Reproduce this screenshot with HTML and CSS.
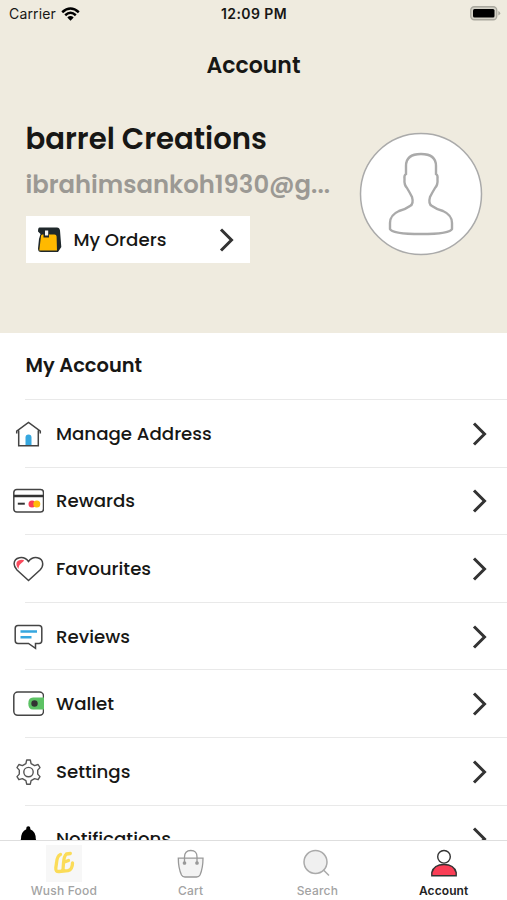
FILE: index.html
```html
<!DOCTYPE html>
<html lang="en">
<head>
<meta charset="utf-8">
<title>Account</title>
<link rel="stylesheet" href="styles.css">
</head>
<body>
<div class="app">
  <header class="hero">
    <div class="status">
      <div class="carrier"><span>Carrier</span>
        <svg width="19" height="14" viewBox="0 0 19 14" fill="none" stroke="#000" stroke-width="2.5"><path d="M1.2 5.2Q9.500-2.300 17.800 5.200"/><path d="M4.200 8.200Q9.500 3.400 14.800 8.200"/><path d="M9.500 13.800L6.300 10.500Q9.500 7.700 12.700 10.500Z" fill="#000" stroke="none"/></svg>
      </div>
      <span class="time">12:09 PM</span>
      <svg class="battery" width="31" height="15" viewBox="0 0 31 15"><rect x=".75" y=".75" width="26" height="13" rx="3.500" fill="#d5d2c7" stroke="#aaa89e" stroke-width="1.300"/><rect x="3" y="3" width="21.500" height="8.500" rx="1.500"/><path d="M28.300 5v4.500q1.900-.7 1.900-2.250T28.300 5z" fill="#aaa89e"/></svg>
    </div>
    <h1 class="title">Account</h1>
    <div class="profile">
      <div class="who">
        <div class="name">barrel Creations</div>
        <div class="email">ibrahimsankoh1930@g...</div>
        <div class="orders">
          <svg width="25" height="26" viewBox="0 0 25 26"><path d="M2.500.5H20Q22.500.5 23 3.500L24.300 20L21 25H4Q1 25 1 21.500L2 12L3.500 7L1 4.500Q1 .5 2.500.5Z" fill="#1f282b"/><path d="M4 9Q4 7.500 5.500 7.500H6.500V10.500H12V7.500H17.500Q19.500 7.500 19.600 9.500L20 23.500H2.300Z" fill="#ffb900"/><path d="M8 3.500h3.200v5H8z" fill="#f5f5f5"/></svg>
          <span class="orders-label">My Orders</span>
          <svg class="chevron" width="16" height="26" viewBox="0 0 16 26"><path d="M2 2.500l10.500 10.500L2 23.500"/></svg>
        </div>
      </div>
      <svg class="avatar" width="124" height="124" viewBox="0 0 124 124"><circle cx="62" cy="62" r="60.500" fill="#fff" stroke="#aaa" stroke-width="1.500"/><path d="M47 42V34Q47 22 62 22T77 34V42Q79 43 78.500 47Q79 53 76 56Q73 61 71 65Q69 72 73 74Q77 77 84 79Q93 83 93 91V97Q91 102 62 102T31 97V91Q31 83 40 79Q47 77 51 74Q55 72 53 65Q51 61 48 56Q45 53 45.500 47Q45 43 47 42Z" fill="none" stroke="#aaa" stroke-width="2.400"/></svg>
    </div>
  </header>

  <main class="menu">
    <h2 class="heading">My Account</h2>
    <div class="row">
      <svg class="icon" viewBox="0 0 32 32"><path d="M6.700 12.500v15.200h19.600V12.500M4.700 15.500v-2.300L16.500 4.500l11.800 8.700v2.300" class="ln"/><path d="M13.500 27V19.500q0-3 3-3t3 3v7.500z" fill="#36a7df"/></svg>
      <span class="label">Manage Address</span>
      <svg class="chevron" width="16" height="26" viewBox="0 0 16 26"><path d="M2 2.500l10.500 10.500L2 23.500"/></svg>
    </div>
    <div class="row">
      <svg class="icon" viewBox="0 0 32 32"><rect x="1.800" y="4.500" width="29.700" height="22.500" rx="3" class="ln"/><path d="M1.800 11h29.700" stroke="#333" stroke-width="2.500"/><path d="M5.800 18.700h7" stroke="#333" stroke-width="2"/><circle cx="20" cy="19" r="3.500" fill="#fa3e56"/><circle cx="24.800" cy="19" r="3.500" fill="#ffbb0a"/></svg>
      <span class="label">Rewards</span>
      <svg class="chevron" width="16" height="26" viewBox="0 0 16 26"><path d="M2 2.500l10.500 10.500L2 23.500"/></svg>
    </div>
    <div class="row">
      <svg class="icon" viewBox="0 0 32 32"><path d="M16.500 27.500L5 17Q2 13.500 2.100 10.800C2.300 4.300 11.500 2 16.500 8.500C21.500 2 30.500 4.300 30.700 10.800Q31 13.500 28 17Z" class="ln"/><path d="M6.500 16Q3.800 12.500 4.600 9.500Q6.500 6 12 7Q12 8.600 9.500 10Q6.500 12 6.500 16Z" fill="#fa4a5d"/></svg>
      <span class="label">Favourites</span>
      <svg class="chevron" width="16" height="26" viewBox="0 0 16 26"><path d="M2 2.500l10.500 10.500L2 23.500"/></svg>
    </div>
    <div class="row">
      <svg class="icon" viewBox="0 0 32 32"><path d="M6 4.500H27Q29.800 4.500 29.800 7.500V19.500Q29.800 22.500 27 22.500H23.500V27.300L16.500 22.500H6Q3.200 22.500 3.200 19.500V7.500Q3.200 4.500 6 4.500" class="ln"/><path d="M8.500 10.500H25M8.500 16.300H19.500" stroke="#36a7df" stroke-width="2.600"/></svg>
      <span class="label">Reviews</span>
      <svg class="chevron" width="16" height="26" viewBox="0 0 16 26"><path d="M2 2.500l10.500 10.500L2 23.500"/></svg>
    </div>
    <div class="row">
      <svg class="icon" viewBox="0 0 32 32"><rect x="1.800" y="4" width="29.700" height="23.300" rx="4" class="ln"/><path d="M32 9.500H21Q16.300 9.500 16.300 15.500T21 21.500H32Z" fill="#5cc264"/><circle cx="22.500" cy="15.500" r="3.200" fill="#333"/></svg>
      <span class="label">Wallet</span>
      <svg class="chevron" width="16" height="26" viewBox="0 0 16 26"><path d="M2 2.500l10.500 10.500L2 23.500"/></svg>
    </div>
    <div class="row">
      <svg class="icon" viewBox="0 0 32 32"><path d="M14.700 4h3.600l.8 3.600 3.500 2 3.500-1.100 1.900 3.100-2.300 2.500v4l2.300 2.500-1.900 3.100-3.500-1.100-3.500 2-.8 3.600h-3.600l-.8-3.600-3.500-2-3.500 1.100L5 20.600l2.300-2.500v-4L5 11.600l1.900-3.100 3.500 1.100 3.500-2z" stroke-linejoin="round" class="thin"/><circle cx="16.500" cy="16.100" r="4.700" class="thin"/></svg>
      <span class="label">Settings</span>
      <svg class="chevron" width="16" height="26" viewBox="0 0 16 26"><path d="M2 2.500l10.500 10.500L2 23.500"/></svg>
    </div>
    <div class="row">
      <svg class="icon" viewBox="0 0 32 32"><path d="M14.300 5Q14.300 3.300 16.300 3.300T18.300 5V6.200Q23.800 8.500 23.800 16L26 23H6.500L9 16Q9 8.500 14.300 6.200Z"/></svg>
      <span class="label">Notifications</span>
      <svg class="chevron" width="16" height="26" viewBox="0 0 16 26"><path d="M2 2.500l10.500 10.500L2 23.500"/></svg>
    </div>
  </main>

  <nav class="tabs">
    <div class="tab">
      <svg width="36" height="37" viewBox="0 0 36 37"><path d="M0 0h36v37H0z" fill="#f7f7f7"/><path d="M14.500 9.500Q11 11 10.500 18L9.800 23Q9.500 26.800 13 26.500L22 25.700Q26.500 24.500 26.500 18M20.500 9Q18 11 17.500 18L17 25M20.500 9L24.300 8.500M18.500 17L22.500 15.500" fill="none" stroke="#fbdc58" stroke-width="3.300" stroke-linecap="round" stroke-linejoin="round"/></svg>
      <span>Wush Food</span>
    </div>
    <div class="tab">
      <svg width="36" height="37" viewBox="0 0 36 37" fill="none" stroke="#999" stroke-width="1.300"><path d="M5.300 13.200H30Q30 23 27 30Q26 32 23.500 32H12Q9.500 32 8.500 30Q5.300 23 5.300 13.200Z" fill="#f3f3f3"/><path d="M11.500 18V12Q11.500 5.500 17.800 5.500T24 12V18"/><circle cx="11.500" cy="18" r="1.200" fill="#999"/><circle cx="24" cy="18" r="1.200" fill="#999"/></svg>
      <span>Cart</span>
    </div>
    <div class="tab">
      <svg width="36" height="37" viewBox="0 0 36 37" fill="none" stroke="#aaa" stroke-width="1.500"><circle cx="16.500" cy="17" r="11.500" fill="#f0f0f0"/><path d="M24.500 25L30 30.500"/></svg>
      <span>Search</span>
    </div>
    <div class="tab active">
      <svg width="36" height="37" viewBox="0 0 36 37" stroke="#333" stroke-width="1.400"><circle cx="18" cy="11.800" r="6.300" fill="#fff"/><path d="M5.800 30.700V27.500Q8 19.500 18 19.500T30.200 27.500V30.700Z" fill="#fa3e56"/></svg>
      <span>Account</span>
    </div>
  </nav>
</div>
</body>
</html>
```
FILE: styles.css
```css
* { box-sizing: border-box; }
body { margin: 0; background: #fff; font-family: Poppins, Inter, sans-serif; color: #171715; }
svg { display: block; flex: none; }
.app { width: 507px; height: 900px; display: flex; flex-direction: column; overflow: hidden; }

.hero { height: 333px; flex: none; background: #efebdf; }
.status { height: 27px; display: grid; grid-template-columns: 1fr auto 1fr; align-items: center; padding: 0 6px 0 9px; font: 14px/20px Inter, sans-serif; }
.carrier { display: flex; align-items: center; gap: 5px; letter-spacing: .15px; }
.time { margin-right: 2px; font-weight: 600; letter-spacing: .4px; }
.battery { justify-self: end; }
.title { margin: 24px 0 0; height: 30px; font-size: 22px; line-height: 30px; font-weight: 600; text-align: center; }
.profile { display: flex; justify-content: space-between; padding: 38px 24px 0 25.500px; }
.name { font-size: 29.200px; line-height: 40px; font-weight: 600; white-space: nowrap; }
.email { margin-top: 8px; font-size: 24.300px; line-height: 36px; font-weight: 600; color: #9b9994; white-space: nowrap; }
.who { width: 306px; }
.orders { width: 224px; height: 47px; margin: 13px 0 0 .500px; padding: 0 15px 0 10.500px; display: flex; align-items: center; background: #fff; }
.orders-label { margin-left: 12px; font-size: 18.200px; line-height: 26px; font-weight: 500; }
.avatar { margin-top: 12.500px; }
.chevron { margin-left: auto; fill: none; stroke: #333; stroke-width: 3; }

.menu { flex: 1; min-height: 0; overflow: hidden; }
.heading { margin: 0 0 0 25.500px; height: 66px; font-size: 19.400px; line-height: 65px; font-weight: 600; }
.row { height: 67.600px; margin-left: 25px; padding: 1px 19px 0 0; border-top: 1px solid #e9e9e9; display: flex; align-items: center; }
.icon { width: 32px; height: 32px; margin-left: -13px; }
.ln { fill: none; stroke: #444; stroke-width: 1.500; }
.thin { fill: none; stroke: #555; stroke-width: 1.400; }
.label { margin-left: 12px; font-size: 18.200px; line-height: 26px; font-weight: 500; }

.tabs { height: 60px; flex: none; display: grid; grid-template-columns: repeat(4, 1fr); border-top: 1px solid #dedede; background: #fff; }
.tab { display: flex; flex-direction: column; align-items: center; padding: 4px 0 0 1px; font: 500 12px/16px Inter, sans-serif; letter-spacing: .2px; color: #a3a3a3; }
.tab span { margin-top: 1px; }
.tab.active { padding-left: 0; color: #222; font-weight: 600; letter-spacing: .1px; }
```
